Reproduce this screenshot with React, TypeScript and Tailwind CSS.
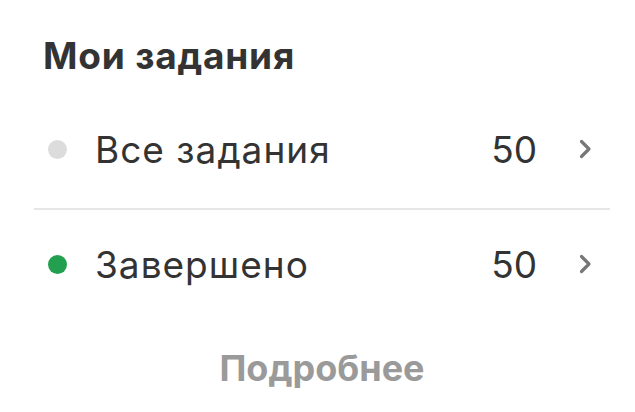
import React from "react";

const ROWS = [
  { label: "Все задания", count: 50, dot: "bg-[#dcdcdc]", height: "h-[112px]" },
  { label: "Завершено", count: 50, dot: "bg-[#22a04f]", height: "h-[114px]" },
];

function Chevron() {
  return (
    <svg width="14" height="20" viewBox="0 0 14 20" fill="none" className="shrink-0">
      <path d="M2.5 2.5 L10 10 L2.5 17.5" stroke="#777777" strokeWidth="3.2" strokeLinecap="round" strokeLinejoin="round" />
    </svg>
  );
}

export default function App() {
  return (
    <div className="w-[635px] h-[412px] bg-white pl-[34px] pr-[25px] pt-[36px] font-['Inter','Roboto',sans-serif] text-[#333333]">
      <h2 className="ml-[9px] text-[37px] leading-[40px] font-bold tracking-[0.8px]">Мои задания</h2>

      <div className="mt-[20px]">
        {ROWS.map((row, idx) => (
          <React.Fragment key={row.label}>
            {idx > 0 && <div className="h-[2px] bg-[#e6e6e6]" />}
            <div className={`flex items-center pb-[6px] ${row.height}`}>
              <span className={`ml-[14px] w-[19px] h-[19px] rounded-full ${row.dot}`} />
              <span className="ml-[28px] flex-1 text-[37px] leading-none tracking-[1px]">{row.label}</span>
              <span className="text-[37px] leading-none">{row.count}</span>
              <span className="ml-[42px] mr-[17px]">
                <Chevron />
              </span>
            </div>
          </React.Fragment>
        ))}
      </div>

      <div className="mt-[24px] text-center text-[36px] leading-[40px] font-bold text-[#9a9a9a]">
        Подробнее
      </div>
    </div>
  );
}
